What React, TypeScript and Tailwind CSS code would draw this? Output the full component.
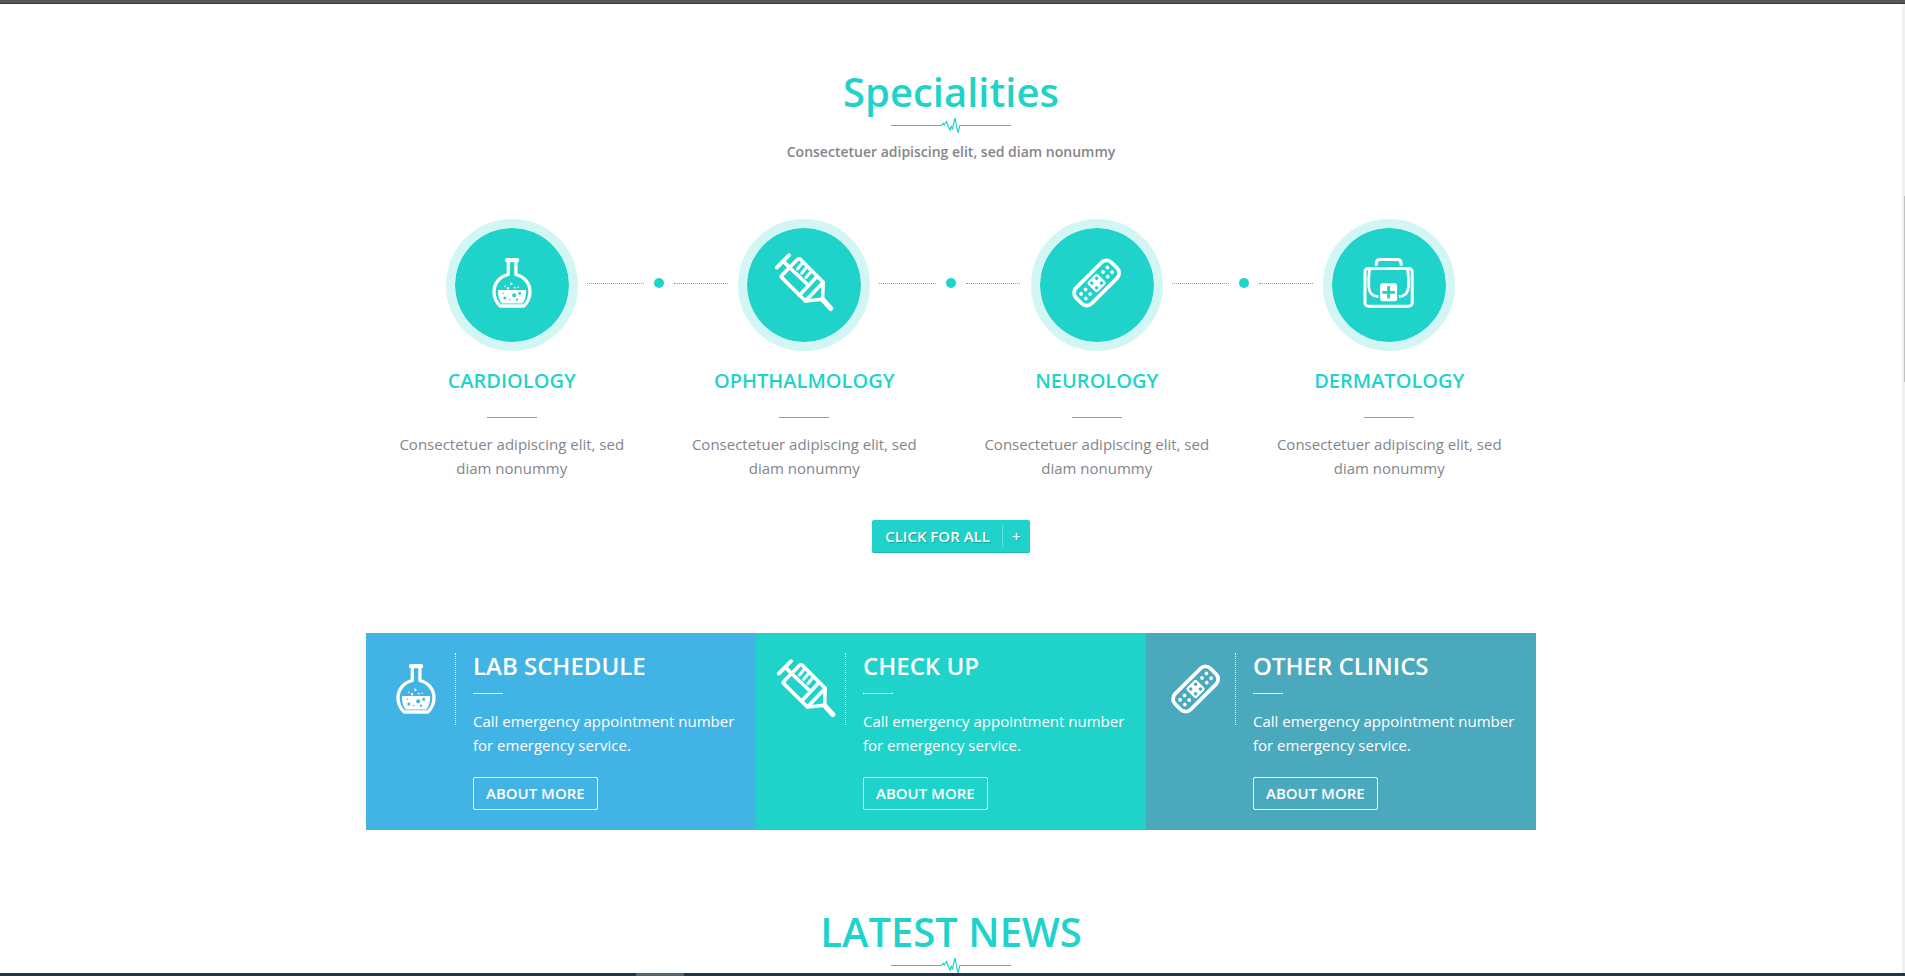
import React from "react";

type IconProps = { className?: string };

const dot = (x: number, y: number, r: number) =>
  `M${x - r} ${y}a${r} ${r} 0 1 0 ${2 * r} 0a${r} ${r} 0 1 0 ${-2 * r} 0z`;

function FlaskIcon({ className }: IconProps) {
  const liquid =
    "M16 37H44.2C44.2 43 43 47.5 40.3 50.6H19.7C17 47.5 16 43 16 37Z" +
    dot(32.2, 42.3, 2.1) + dot(37.7, 40.3, 1.5) + dot(21.5, 40.3, 0.8) +
    dot(22.8, 45, 1.5) + dot(27.7, 46.7, 0.8) + dot(35, 46.7, 1.1);
  return (
    <svg viewBox="0 0 60 60" className={className} aria-hidden="true">
      <rect x="23" y="5" width="14.2" height="4.2" rx="2" fill="currentColor" />
      <path
        d="M26.3 8V21.5C18 23.5 12 30 12 38.7C12 44.5 14.5 49.5 18.2 53H41.8C45.5 49.5 48 44.5 48 38.7C48 30 42 23.5 33.9 21.5V8"
        fill="none" stroke="currentColor" strokeWidth="3.3" strokeLinejoin="round"
      />
      <path d={liquid} fill="currentColor" fillRule="evenodd" />
      <path
        d={dot(29.3, 30.7, 1.2) + dot(23, 33.3, 0.8) + dot(26, 35.3, 1.2) + dot(32.7, 34.7, 0.9) + dot(36.3, 34.3, 0.8)}
        fill="currentColor"
      />
    </svg>
  );
}

function SyringeIcon({ className }: IconProps) {
  return (
    <svg viewBox="0 0 60 60" className={className} aria-hidden="true"
      fill="none" stroke="currentColor" strokeWidth="3.6" strokeLinecap="round" strokeLinejoin="round">
      <path d="M2.8 14.6L15 2.2M9.2 8.2L15 14" strokeWidth="3.8" />
      <path d="M7.8 22.4L23.4 6.6Q25 5 26.6 6.6L49.2 29.2L31.5 48L7.8 24.6Q6.8 23.5 7.8 22.4Z" />
      <path d="M14.5 13.5L34.3 32.3M42.5 24L25.5 42.2" />
      <path d="M28 10.5L23.5 16M32.3 14.8L27.7 20.3M36.6 19L32 24.5" strokeWidth="3" />
      <path d="M49.2 29.2L48.6 46.2L31.5 48" />
      <path d="M48.4 46.2L56.8 55.5" strokeWidth="5" />
    </svg>
  );
}

function BandageIcon({ className }: IconProps) {
  const outer = [-18.6, -12.4, 12.4, 18.6].map((u) => dot(u, -3.3, 1.9) + dot(u, 3.3, 1.9)).join("");
  const pad =
    "M-5-7H5A2 2 0 0 1 7-5V5A2 2 0 0 1 5 7H-5A2 2 0 0 1-7 5V-5A2 2 0 0 1-5-7Z" +
    dot(-3.4, -3.4, 1.7) + dot(3.4, -3.4, 1.7) + dot(-3.4, 3.4, 1.7) + dot(3.4, 3.4, 1.7);
  return (
    <svg viewBox="0 0 60 60" className={className} aria-hidden="true">
      <g transform="translate(29.6 30) rotate(-45)">
        <rect x="-25" y="-11" width="50" height="22" rx="7" fill="none" stroke="currentColor" strokeWidth="3.8" />
        <path d={outer} fill="currentColor" />
        <path d={pad} fill="currentColor" fillRule="evenodd" />
      </g>
    </svg>
  );
}

function BagIcon({ className }: IconProps) {
  return (
    <svg viewBox="0 0 60 60" className={className} aria-hidden="true" fill="none" stroke="currentColor" strokeWidth="3">
      <path d="M17.3 12.7V10.5Q17.3 6.6 21.2 6.6H38.2Q42.1 6.6 42.1 10.5V12.7" />
      <rect x="6" y="15.4" width="47.2" height="37.8" rx="3.4" />
      <path d="M10.6 16C9.4 24 9.4 28 9.8 34Q10.6 43.4 19.4 43.6M48.6 16C49.8 24 49.8 28 49.4 34Q48.6 43.4 39.8 43.6" strokeWidth="2.8" />
      <path
        d="M23.3 30.2H35.9Q38.1 30.2 38.1 32.4V46Q38.1 48.2 35.9 48.2H23.3Q21.1 48.2 21.1 46V32.4Q21.1 30.2 23.3 30.2ZM28.2 33V37.9H23.3V40.7H28.2V45.6H31V40.7H35.9V37.9H31V33Z"
        fill="currentColor" fillRule="evenodd" stroke="none"
      />
    </svg>
  );
}

function Pulse() {
  return (
    <svg viewBox="0 0 120 17" className="mt-[3px] h-[17px] w-[120px]" aria-hidden="true">
      <path
        d="M0 8.5H50.7L52 6.3L53.3 8L55.3 4.5L59 13L60.2 9.5L61.4 11.8L64 1L67 15.8L68.8 8.5H120"
        fill="none" stroke="#1fd3ca" strokeWidth="1.2"
      />
    </svg>
  );
}

function SectionTitle({ children }: { children: React.ReactNode }) {
  return (
    <div className="flex flex-col items-center">
      <h2 className="text-[40px] leading-[44px] font-semibold text-[#1fd3ca]">{children}</h2>
      <Pulse />
    </div>
  );
}

const specialities = [
  { name: "CARDIOLOGY", Icon: FlaskIcon },
  { name: "OPHTHALMOLOGY", Icon: SyringeIcon },
  { name: "NEUROLOGY", Icon: BandageIcon },
  { name: "DERMATOLOGY", Icon: BagIcon },
];

const cards = [
  { title: "LAB SCHEDULE", Icon: FlaskIcon, color: "bg-[#42b3e5]" },
  { title: "CHECK UP", Icon: SyringeIcon, color: "bg-[#1fd3ca]" },
  { title: "OTHER CLINICS", Icon: BandageIcon, color: "bg-[#4ba9bd]" },
];

function Connector() {
  return (
    <div className="absolute top-[59px] left-full flex w-[160px] -translate-x-[81px] items-center gap-[10px] px-[9px]" aria-hidden="true">
      <span className="w-[57px] border-t border-dotted border-[#1fd3ca]" />
      <span className="size-[10px] rounded-full bg-[#1fd3ca]" />
      <span className="w-[54px] border-t border-dotted border-[#1fd3ca]" />
    </div>
  );
}

export default function App() {
  return (
    <div className="flex h-screen flex-col bg-white font-['Open_Sans',sans-serif] text-[15px] leading-6 text-[#84858a]">
      <div className="h-1 shrink-0 border-b border-[#3a3a3a] bg-[#565656]" />
      <div className="flex min-h-0 flex-1">
        <main className="min-w-0 flex-1 overflow-hidden">
          <div className="mx-auto max-w-[1170px]">
            <section className="flex flex-col items-center pt-[66px]">
              <SectionTitle>Specialities</SectionTitle>
              <p className="mt-[6px] text-[14px] font-semibold">Consectetuer adipiscing elit, sed diam nonummy</p>
              <ul className="mt-[55px] grid w-full grid-cols-4">
                {specialities.map(({ name, Icon }, i) => (
                  <li key={name} className="relative flex flex-col items-center pr-4 pl-[15px] text-center">
                    <div className="flex size-[132px] justify-center rounded-full border-[9px] border-[#d2f6f4] bg-[#1fd3ca] bg-clip-padding pt-[25px] text-white">
                      <Icon className="size-[60px]" />
                    </div>
                    {i < specialities.length - 1 && <Connector />}
                    <h3 className="mt-[18px] text-[20px] leading-6 font-semibold text-[#1fd3ca]">{name}</h3>
                    <span className="mt-6 w-[50px] border-t border-[#1fd3ca]" />
                    <p className="mt-[14px] px-4">Consectetuer adipiscing elit, sed diam nonummy</p>
                  </li>
                ))}
              </ul>
              <button
                type="button"
                className="mt-10 flex h-[33px] items-center rounded-[2px] border-b border-[#1ab3ab] bg-[#1fd3ca] pl-[13px] text-[15px] font-semibold text-white text-shadow-[1px_1px_1px_rgba(0,0,0,0.25)]"
              >
                CLICK FOR ALL
                <span className="ml-3 flex h-[22px] w-7 items-center justify-center border-l border-[#5fe0da]">+</span>
              </button>
            </section>

            <section className="mt-20 grid grid-cols-3">
              {cards.map(({ title, Icon, color }) => (
                <article key={title} className={`flex items-start p-5 text-white ${color}`}>
                  <div className="flex h-[72px] w-[70px] shrink-0 items-start border-r border-dotted border-white pt-[6px]">
                    <Icon className="size-[60px]" />
                  </div>
                  <div className="ml-[17px]">
                    <h3 className="text-[24px] leading-[26px] font-semibold">{title}</h3>
                    <span className="mt-[14px] block w-[30px] border-t border-white" />
                    <p className="mt-[15px]">Call emergency appointment number for emergency service.</p>
                    <a href="#more" className="mt-5 inline-flex h-[33px] items-center rounded-[2px] border border-white px-3 pb-px font-semibold">
                      ABOUT MORE
                    </a>
                  </div>
                </article>
              ))}
            </section>

            <section className="pt-20">
              <SectionTitle>LATEST NEWS</SectionTitle>
            </section>
          </div>
        </main>
        <div className="w-[3px] bg-[#f0f0f0] pt-[192px]" aria-hidden="true">
          <div className="ml-auto h-[186px] w-px bg-[#c1c1c1]" />
        </div>
      </div>
      <div className="flex h-[3px] shrink-0 bg-[#223545]">
        <span className="ml-[33.4%] w-12 bg-[#56656d]" />
      </div>
    </div>
  );
}
